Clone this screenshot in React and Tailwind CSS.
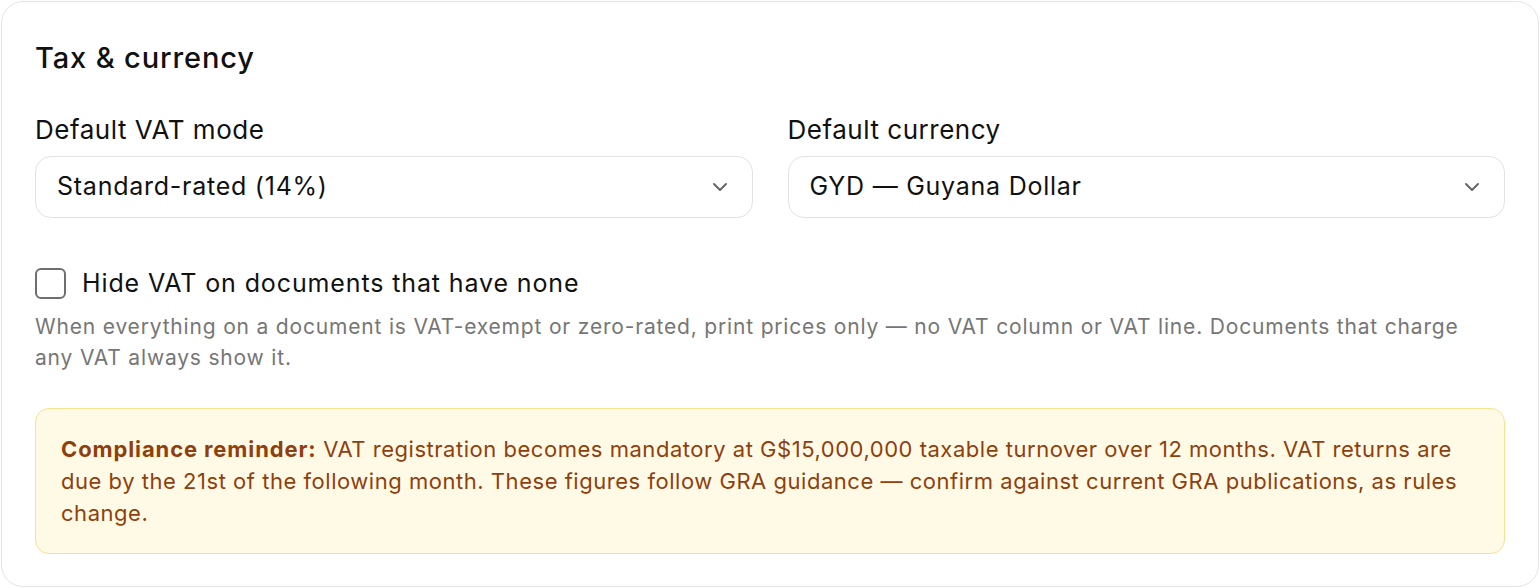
import React, { useState } from 'react';
import { ChevronDown } from 'lucide-react';

const vatModes = ['Standard-rated (14%)', 'Zero-rated (0%)', 'Exempt'];
const currencies = ['GYD — Guyana Dollar', 'USD — US Dollar'];

const SelectField = ({ label, value, options, onChange }) => (
  <label className="flex flex-col gap-[10px]">
    <span className="text-[26px] leading-[32px] tracking-[0.02em] text-[#111]">{label}</span>
    <div className="relative">
      <select
        value={value}
        onChange={(e) => onChange(e.target.value)}
        className="appearance-none w-full h-[62px] rounded-[16px] border border-[#e3e3e3] bg-white pl-[21px] pr-12 text-[25px] tracking-[0.03em] text-[#111] outline-none"
      >
        {options.map((o) => (
          <option key={o}>{o}</option>
        ))}
      </select>
      <ChevronDown
        size={24}
        strokeWidth={2}
        className="pointer-events-none absolute right-[21px] top-1/2 -translate-y-1/2 text-[#666]"
      />
    </div>
  </label>
);

const App = () => {
  const [vatMode, setVatMode] = useState(vatModes[0]);
  const [currency, setCurrency] = useState(currencies[0]);
  const [hideVat, setHideVat] = useState(false);

  return (
    <div className="bg-white p-px font-['Inter',sans-serif]">
      <div className="rounded-[22px] border border-[#e4e4e4] bg-white p-[33px] pb-[32px]">
        <h2 className="text-[29px] leading-[46px] font-medium tracking-[0.03em] text-[#111]">Tax &amp; currency</h2>

        <div className="mt-[33px] grid grid-cols-2 gap-[35px]">
          <SelectField label="Default VAT mode" value={vatMode} options={vatModes} onChange={setVatMode} />
          <SelectField label="Default currency" value={currency} options={currencies} onChange={setCurrency} />
        </div>

        <label className="mt-[49px] flex items-center gap-[16px] cursor-pointer">
          <input
            type="checkbox"
            checked={hideVat}
            onChange={(e) => setHideVat(e.target.checked)}
            className="appearance-none w-[31px] h-[31px] rounded-[6px] border-2 border-[#6e6e6e] bg-white checked:bg-[#111]"
          />
          <span className="text-[25px] leading-[32px] tracking-[0.035em] text-[#111]">
            Hide VAT on documents that have none
          </span>
        </label>
        <p className="mt-[12px] pr-[20px] text-[21px] leading-[31px] tracking-[0.039em] text-[#767676]">
          When everything on a document is VAT-exempt or zero-rated, print prices only — no VAT column or VAT line.
          Documents that charge any VAT always show it.
        </p>

        <div className="mt-[35px] rounded-[14px] border border-[#f7e291] bg-[#fffae6] px-[25px] py-[24px] text-[22px] leading-[32px] tracking-[0.024em] text-[#8f3f0c]">
          <strong className="font-bold tracking-[0.04em]">Compliance reminder:</strong> VAT registration becomes
          mandatory at G$15,000,000 taxable turnover over 12 months. VAT returns are due by the 21st of the following
          month. These figures follow GRA guidance — confirm against current GRA publications, as rules change.
        </div>
      </div>
    </div>
  );
};

export default App;
